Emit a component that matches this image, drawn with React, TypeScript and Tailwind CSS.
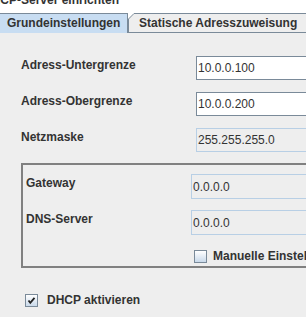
const font = "[font-family:'Liberation_Sans',Arial,sans-serif]"

function Field({ value, disabled, h = "h-[24px]" }: { value: string; disabled?: boolean; h?: string }) {
  return (
    <div
      className={`w-[130px] shrink-0 ${h} border flex items-center pl-[1px] text-[12px] leading-[14px] text-[#333] ${
        disabled ? "border-[#b8cfe5] bg-transparent" : "border-[#7a8a99] bg-white"
      }`}
    >
      {value}
    </div>
  )
}

function Check({ checked }: { checked?: boolean }) {
  return (
    <span className="w-[13px] h-[13px] shrink-0 border border-[#7a8a99] bg-linear-to-b from-white to-[#c9d9ea] flex items-center justify-center">
      {checked && (
        <svg width="9" height="9" viewBox="0 0 9 9">
          <path d="M1.5 4.5 L3.3 6.8 L7.5 1.8" stroke="#222" strokeWidth="1.8" fill="none" />
        </svg>
      )}
    </span>
  )
}

export default function App() {
  const label = "text-[12px] leading-[14px] font-bold text-[#333] pt-[2px] shrink-0"
  return (
    <div className={`w-[306px] h-[317px] overflow-hidden bg-[#eeeeee] ${font}`}>
      {/* cut-off dialog title */}
      <div className="h-[13px] bg-white overflow-hidden">
        <div className="-mt-[7px] -ml-[17px] text-[12px] leading-[14px] font-bold text-[#333] whitespace-nowrap">
          DHCP-Server einrichten
        </div>
      </div>

      {/* tabs */}
      <div className="flex h-[20px] bg-white">
        <div className="w-[128px] shrink-0 bg-[#c8ddf2] border-t border-r border-[#7a8a99] pl-[7px] pt-[2px] text-[12px] leading-[14px] font-bold text-[#333] whitespace-nowrap">
          Grundeinstellungen
        </div>
        <div className="relative flex-1 bg-[#eeeeee] border-t border-b border-[#7a8a99] pl-[11px] pt-[2px] text-[12px] leading-[14px] font-bold text-[#333] whitespace-nowrap">
          <svg className="absolute left-0 top-[-1px]" width="8" height="20" viewBox="0 0 8 20">
            <polygon points="0,0 7,0 0,6" fill="#ffffff" />
            <polyline points="0.5,20 0.5,6 6,0.5 8,0.5" stroke="#7a8a99" strokeWidth="1" fill="none" />
          </svg>
          Statische Adresszuweisung
        </div>
      </div>

      {/* content */}
      <div className="pt-[23px] pl-[21px]">
        <div className="flex flex-col gap-[12px]">
          <div className="flex">
            <div className={`w-[175px] ${label}`}>Adress-Untergrenze</div>
            <Field value="10.0.0.100" />
          </div>
          <div className="flex">
            <div className={`w-[175px] ${label}`}>Adress-Obergrenze</div>
            <Field value="10.0.0.200" />
          </div>
          <div className="flex">
            <div className={`w-[175px] ${label}`}>Netzmaske</div>
            <Field value="255.255.255.0" disabled />
          </div>
        </div>

        <div className="mt-[11px] w-[300px] border-2 border-[#808080] pt-[9px] pl-[3px] pb-[3px]">
          <div className="flex flex-col gap-[11px]">
            <div className="flex">
              <div className={`w-[165px] ${label}`}>Gateway</div>
              <Field value="0.0.0.0" disabled h="h-[25px]" />
            </div>
            <div className="flex">
              <div className={`w-[165px] ${label}`}>DNS-Server</div>
              <Field value="0.0.0.0" disabled h="h-[25px]" />
            </div>
          </div>
          <label className="mt-[14px] ml-[168px] flex items-center gap-[6px] text-[12px] leading-[14px] font-bold text-[#333] whitespace-nowrap">
            <Check />
            Manuelle Einstellungen
          </label>
        </div>

        <label className="mt-[25px] ml-[4px] flex items-center gap-[9px] text-[12px] leading-[14px] font-bold text-[#333] whitespace-nowrap">
          <Check checked />
          DHCP aktivieren
        </label>
      </div>
    </div>
  )
}
